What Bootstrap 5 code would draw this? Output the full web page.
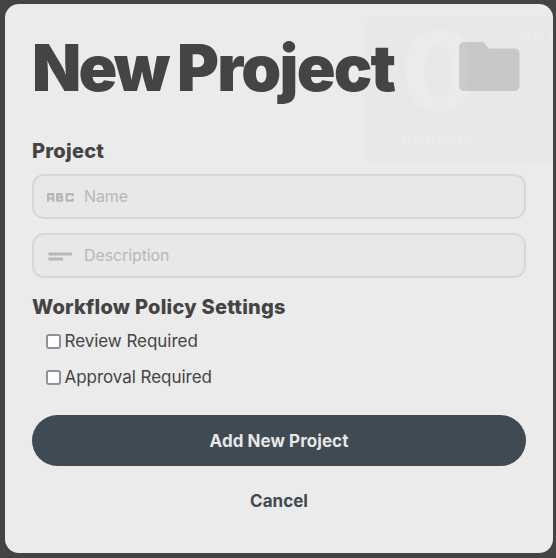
<!DOCTYPE html>
<html lang="en">
<head>
<meta charset="utf-8">
<meta name="viewport" content="width=device-width, initial-scale=1">
<title>New Project</title>
<link rel="stylesheet" href="https://cdn.jsdelivr.net/npm/bootstrap@5.3.0/dist/css/bootstrap.min.css">
<style>
body{background:#444;font-family:Inter,"Liberation Sans",sans-serif;color:#444;height:558px;padding:4px 3px 5px 5px;overflow:hidden}
.panel{height:549px;background:#ebebeb;border-radius:14px;padding:0 27px}
.panel>*:not(.ghost){position:relative}
.title{font-size:64px;font-weight:900;line-height:78px;letter-spacing:-2.7px;margin:25px 0 0;white-space:nowrap}
.title span{letter-spacing:-1.750px;margin-left:-.5px}
.top-row{height:127px}
.folder{width:61px;height:49px;margin:38px 6px 0 0}
.section{font-size:20px;font-weight:800;line-height:24px;margin:0;letter-spacing:.24px}
.field{height:45px;border:2px solid #d6d7d7;border-radius:12px;background:#e8e8e8;padding:0 12px}
.section+.field{margin-top:11px}
.field+.field{margin-top:14px}
.field svg{width:28px;height:20px;flex:none}
.field input{font-size:16px;color:#444;padding:0 0 2px;margin-left:10px;letter-spacing:-.1px}
.field input::placeholder{color:#b5b8bb;opacity:1}
.policy{margin-top:17px;margin-bottom:4px}
.check-row{height:36px;padding-left:14px;font-size:17px;line-height:24px;letter-spacing:-.04px}
.check-row .form-check-input{width:15px;height:15px;margin:0 3.500px 0 0;border:2px solid #8f8f9d;border-radius:3px;background-color:#fff}
.btn-add{height:51px;margin-top:20px;padding:8px 0 6px;font-size:17px;font-weight:700;letter-spacing:.06px;background:#404a52;color:#e6e6e6}
.btn-cancel{margin-top:23px;font-size:17px;font-weight:700;color:#404a52;line-height:24px}
.ghost{left:359px;top:12px;width:189px;height:147px;border-radius:12px 0 0 12px;background:#e8e8e8;color:#ebebeb;font-weight:700;overflow:hidden}
.ghost span{position:absolute;line-height:1;white-space:nowrap}
.ghost .g-num{font-size:110px;font-weight:800;line-height:82px;left:37px;top:14px}
.g-lab{font-size:18px;left:37px;top:114px}
.g-by{font-size:18px;left:156px;top:10px}
.g-axis{font-size:9px;left:151px;top:60px;writing-mode:vertical-rl;letter-spacing:5px}
</style>
<script src="https://cdn.jsdelivr.net/npm/bootstrap@5.3.0/dist/js/bootstrap.bundle.min.js"></script>
</head>
<body>
<main class="panel position-relative overflow-hidden">
  <div class="ghost position-absolute" aria-hidden="true">
    <span class="g-num">0</span><span class="g-lab">Projects</span><span class="g-by">By W</span><span class="g-axis">012345</span>
  </div>
  <header class="top-row d-flex justify-content-between align-items-start">
    <h1 class="title">New <span>Project</span></h1>
    <svg class="folder" viewBox="0 0 61 49"><path fill="#c7c9c9" d="M6 0H22.500Q24 0 25 1L30 6.500H55Q60.500 6.500 60.500 12V43.500Q60.500 49 55 49H6Q0 49 0 43V6Q0 0 6 0Z"/><path fill="#cacbcb" d="M6 0H7Q10.500 9 10.500 24Q10.500 38 5 48.900Q0 48.500 0 43V6Q0 0 6 0Z"/></svg>
  </header>
  <form>
    <h2 class="section pt-2">Project</h2>
    <div class="field d-flex align-items-center">
      <svg viewBox="0 0 28 20" fill="none" stroke="#b5b8bb" stroke-width="2.200" stroke-linejoin="round"><path d="M2.100 14.500V7H7.200V14.500M2.100 11.300H7.200M11.100 7H15.600V9.300L16.200 10.200V13.400H11.100ZM11.100 10.200H16M26.700 9V7H20.700V13.400H26.700V11.500" transform="translate(0 .2)"/></svg>
      <input class="form-control border-0 bg-transparent shadow-none" type="text" placeholder="Name" aria-label="Name">
    </div>
    <div class="field d-flex align-items-center">
      <svg viewBox="0 0 28 20" fill="#b5b8bb"><path d="M2.500 6.500H26V9.500H2.500ZM2.500 11.500H17V14.500H2.500Z"/></svg>
      <input class="form-control border-0 bg-transparent shadow-none" type="text" placeholder="Description" aria-label="Description">
    </div>
    <h2 class="section policy">Workflow Policy Settings</h2>
    <label class="check-row d-flex align-items-center"><input class="form-check-input" type="checkbox"><span>Review Required</span></label>
    <label class="check-row d-flex align-items-center"><input class="form-check-input" type="checkbox"><span>Approval Required</span></label>
    <button class="btn btn-add rounded-pill w-100 border-0" type="button">Add New Project</button>
    <button class="btn btn-cancel w-100 border-0 p-0" type="button">Cancel</button>
  </form>
</main>
</body>
</html>
